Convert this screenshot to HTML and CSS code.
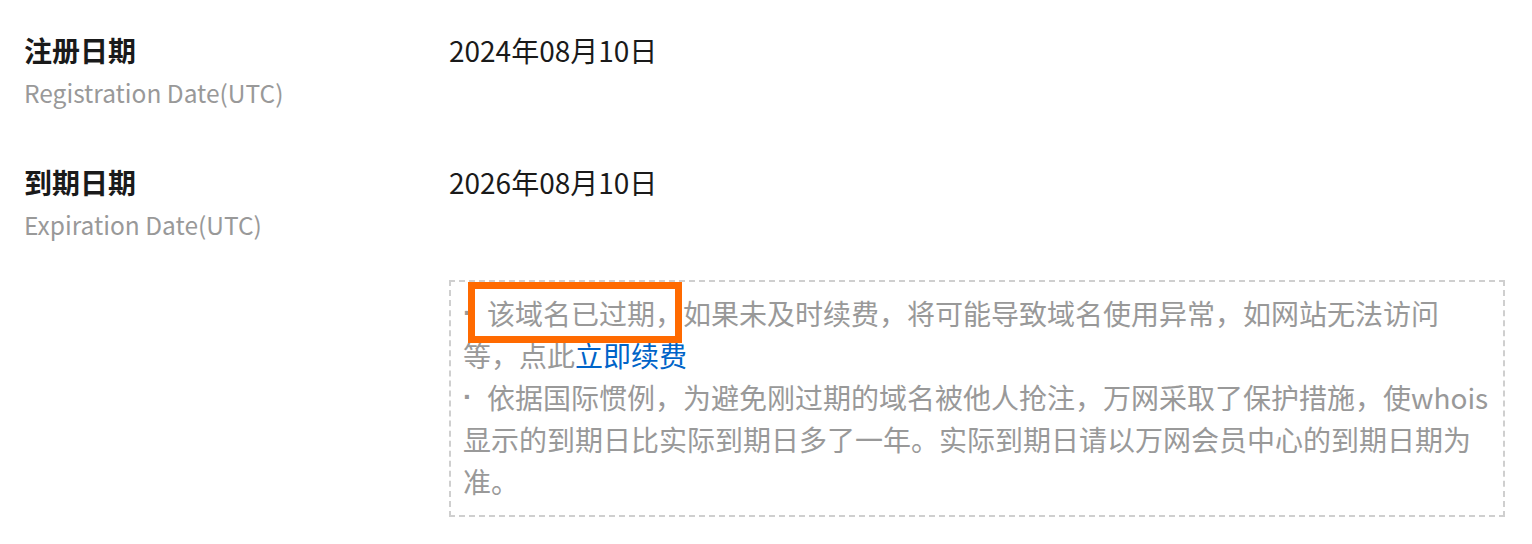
FILE: index.html
```html
<!DOCTYPE html>
<html lang="zh-CN">
<head>
  <meta charset="UTF-8" />
  <title>域名信息</title>
  <link rel="stylesheet" href="styles.css">
</head>
<body>
  <div class="info">
    <div class="row">
      <div class="label">
        <h3>注册日期</h3>
        <p>Registration Date(UTC)</p>
      </div>
      <div class="value">2024年08月10日</div>
    </div>

    <div class="row">
      <div class="label">
        <h3>到期日期</h3>
        <p>Expiration Date(UTC)</p>
      </div>
      <div class="value">2026年08月10日</div>
    </div>

    <div class="row">
      <div class="label"></div>
      <div class="notice">
        <p><span class="dot">·</span><span class="mark">该域名已过期，</span>如果未及时续费，将可能导致域名使用异常，如网站无法访问等，点此<a href="#">立即续费</a></p>
        <p><span class="dot">·</span>依据国际惯例，为避免刚过期的域名被他人抢注，万网采取了保护措施，使whois显示的到期日比实际到期日多了一年。实际到期日请以万网会员中心的到期日期为准。</p>
      </div>
    </div>
  </div>
</body>
</html>
```

FILE: styles.css
```css
body {
  margin: 0;
  background: #fff;
  font-family: "Noto Sans CJK SC", "Noto Sans", sans-serif;
  color: #262626;
}

.info {
  padding: 29px 27px 0 24px;
}

.row {
  display: grid;
  grid-template-columns: 425px 1fr;
  margin-bottom: 50px;
}

.label h3 {
  margin: 0;
  font-size: 28px;
  line-height: 42px;
  font-weight: 700;
  color: #1a1a1a;
}

.label p {
  margin: 4px 0 0;
  font-size: 24.5px;
  line-height: 36px;
  color: #999;
}

.value {
  font-size: 28px;
  line-height: 42px;
  color: #1a1a1a;
}

.row:last-child {
  margin: -13px 0 0;
}

.notice {
  border: 2px dashed #cfcfcf;
  padding: 10px 12px 13px;
  font-size: 28px;
  line-height: 42px;
  color: #999;
}

.notice p {
  margin: 0;
}

.notice a {
  color: #0064c8;
  text-decoration: none;
}

.dot {
  display: inline-block;
  width: 24px;
  vertical-align: top;
  font-family: "Liberation Sans", sans-serif;
  font-weight: 700;
}

.mark {
  position: relative;
}

.mark::after {
  content: "";
  position: absolute;
  left: -19px;
  right: 1px;
  top: -11px;
  bottom: -10px;
  border: 7px solid #ff6a00;
}
```
